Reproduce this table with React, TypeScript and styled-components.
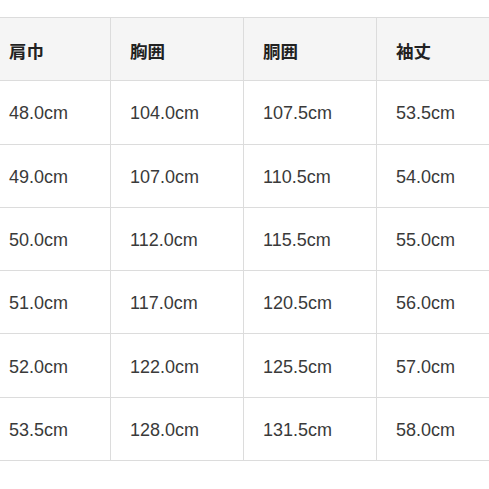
import React from "react";
import styled, { createGlobalStyle } from "styled-components";

const GlobalStyle = createGlobalStyle`
  html, body {
    margin: 0;
    padding: 0;
    background: #fff;
    overflow: hidden;
  }
`;

const headers = ["肩巾", "胸囲", "胴囲", "袖丈"];

const rows = [
  ["48.0cm", "104.0cm", "107.5cm", "53.5cm"],
  ["49.0cm", "107.0cm", "110.5cm", "54.0cm"],
  ["50.0cm", "112.0cm", "115.5cm", "55.0cm"],
  ["51.0cm", "117.0cm", "120.5cm", "56.0cm"],
  ["52.0cm", "122.0cm", "125.5cm", "57.0cm"],
  ["53.5cm", "128.0cm", "131.5cm", "58.0cm"],
];

const widths = [121, 133, 133, 133];

const App = (): JSX.Element => (
  <>
    <GlobalStyle />
    <Page>
      <SizeTable>
        <colgroup>
          {widths.map((w, i) => (
            <col key={i} style={{ width: w }} />
          ))}
        </colgroup>
        <thead>
          <tr>
            {headers.map((h) => (
              <HeadCell key={h}>{h}</HeadCell>
            ))}
          </tr>
        </thead>
        <tbody>
          {rows.map((r, i) => (
            <tr key={i}>
              {r.map((v, j) => (
                <Cell key={j}>{v}</Cell>
              ))}
            </tr>
          ))}
        </tbody>
      </SizeTable>
    </Page>
  </>
);

const Page = styled.div`
  padding-top: 17px;
  margin-left: -11px;
  width: 540px;
`;

const SizeTable = styled.table`
  border-collapse: collapse;
  table-layout: fixed;
  width: 520px;
`;

const BaseCell = styled.td`
  height: 63.3px;
  padding: 3px 0 0 19px;
  box-sizing: border-box;
  border: 1px solid #dcdcdc;
  text-align: left;
  vertical-align: middle;
`;

const HeadCell = styled(BaseCell).attrs({ as: "th" })`
  background: #f5f5f5;
  color: #222;
  font-family: "Noto Sans CJK JP", "Noto Sans", sans-serif;
  font-size: 17.5px;
  font-weight: 700;
`;

const Cell = styled(BaseCell)`
  background: #fff;
  color: #3a3a3a;
  font-family: "Liberation Sans", Arial, sans-serif;
  font-size: 18px;
`;

export default App;
